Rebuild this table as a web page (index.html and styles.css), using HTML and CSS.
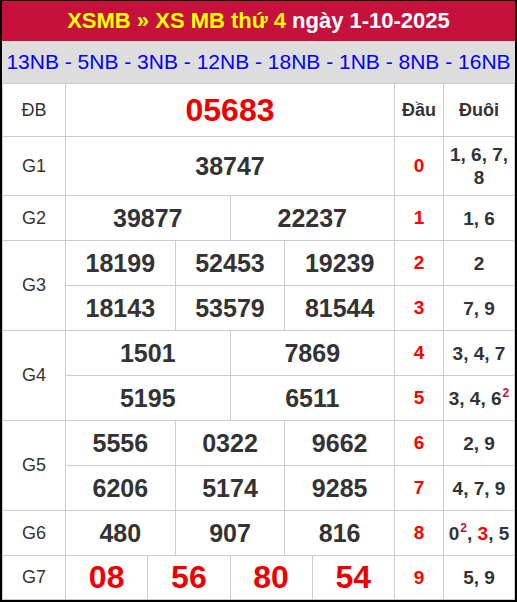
FILE: index.html
```html
<!DOCTYPE html>
<html lang="vi">
<head>
<meta charset="utf-8">
<title>XSMB thứ 4 ngày 1-10-2025</title>
<link rel="stylesheet" href="styles.css">
</head>
<body>
<div class="board">
  <div class="title"><span class="hl">XSMB » XS MB thứ 4</span> ngày 1-10-2025</div>
  <div class="codes">13NB - 5NB - 3NB - 12NB - 18NB - 1NB - 8NB - 16NB</div>
  <div class="grid">
    <div class="cell lbl">ĐB</div>
    <div class="cell s12 num db">05683</div>
    <div class="cell head">Đầu</div>
    <div class="cell head">Đuôi</div>

    <div class="cell lbl">G1</div>
    <div class="cell s12 num">38747</div>
    <div class="cell dau">0</div>
    <div class="cell duoi">1, 6, 7, 8</div>

    <div class="cell lbl">G2</div>
    <div class="cell s6 num">39877</div>
    <div class="cell s6 num">22237</div>
    <div class="cell dau">1</div>
    <div class="cell duoi">1, 6</div>

    <div class="cell lbl r2">G3</div>
    <div class="cell s4 num">18199</div>
    <div class="cell s4 num">52453</div>
    <div class="cell s4 num">19239</div>
    <div class="cell dau">2</div>
    <div class="cell duoi">2</div>
    <div class="cell s4 num">18143</div>
    <div class="cell s4 num">53579</div>
    <div class="cell s4 num">81544</div>
    <div class="cell dau">3</div>
    <div class="cell duoi">7, 9</div>

    <div class="cell lbl r2">G4</div>
    <div class="cell s6 num">1501</div>
    <div class="cell s6 num">7869</div>
    <div class="cell dau">4</div>
    <div class="cell duoi">3, 4, 7</div>
    <div class="cell s6 num">5195</div>
    <div class="cell s6 num">6511</div>
    <div class="cell dau">5</div>
    <div class="cell duoi"><span>3, 4, 6<sup>2</sup></span></div>

    <div class="cell lbl r2">G5</div>
    <div class="cell s4 num">5556</div>
    <div class="cell s4 num">0322</div>
    <div class="cell s4 num">9662</div>
    <div class="cell dau">6</div>
    <div class="cell duoi">2, 9</div>
    <div class="cell s4 num">6206</div>
    <div class="cell s4 num">5174</div>
    <div class="cell s4 num">9285</div>
    <div class="cell dau">7</div>
    <div class="cell duoi">4, 7, 9</div>

    <div class="cell lbl">G6</div>
    <div class="cell s4 num">480</div>
    <div class="cell s4 num">907</div>
    <div class="cell s4 num">816</div>
    <div class="cell dau">8</div>
    <div class="cell duoi"><span>0<sup>2</sup>, <em class="red">3</em>, 5</span></div>

    <div class="cell lbl">G7</div>
    <div class="cell s3 num big">08</div>
    <div class="cell s3 num big">56</div>
    <div class="cell s3 num big">80</div>
    <div class="cell s3 num big">54</div>
    <div class="cell dau">9</div>
    <div class="cell duoi">5, 9</div>
  </div>
</div>
</body>
</html>
```
FILE: styles.css
```css
html, body {
  margin: 0;
  padding: 0;
  background: #000;
}
body {
  font-family: "Liberation Sans", Arial, sans-serif;
}
.board {
  width: 513px;
  margin: 1px 2px 0 2px;
  background: #fff;
}
.title {
  height: 40px;
  background: #c5113c;
  color: #fff;
  font-weight: bold;
  font-size: 22px;
  display: flex;
  align-items: center;
  justify-content: center;
  white-space: nowrap;
}
.title .hl {
  color: #ffff00;
  margin-right: 6px;
}
.codes {
  height: 42px;
  background: #dddddd;
  color: #0000ff;
  font-size: 21px;
  display: flex;
  align-items: center;
  justify-content: center;
  white-space: nowrap;
}
.grid {
  display: grid;
  grid-template-columns: 62px repeat(12, 1fr) 48px 70px;
  grid-template-rows: 52px 58px repeat(8, 44px) 43px;
  gap: 1px;
  padding: 1px;
  background: #cccccc;
}
.cell {
  background: #fff;
  display: flex;
  align-items: center;
  justify-content: center;
  text-align: center;
  color: #333;
}
.lbl {
  grid-column: 1;
  font-size: 18px;
}
.r2 { grid-row: span 2; }
.s12 { grid-column: span 12; }
.s6 { grid-column: span 6; }
.s4 { grid-column: span 4; }
.s3 { grid-column: span 3; }
.num {
  font-size: 25px;
  font-weight: bold;
}
.db, .big {
  color: #ee0000;
  font-size: 32px;
}
.head {
  font-size: 18px;
  font-weight: bold;
}
.dau {
  color: #ff0000;
  font-size: 19px;
  font-weight: bold;
}
.duoi {
  font-size: 19px;
  font-weight: bold;
  padding: 0 3px;
  line-height: 23px;
}
.duoi sup {
  color: #c5113c;
  font-size: 12px;
  line-height: 0;
  vertical-align: 8px;
  margin-left: 1px;
}
.duoi .red {
  color: #ff0000;
  font-style: normal;
}
```
